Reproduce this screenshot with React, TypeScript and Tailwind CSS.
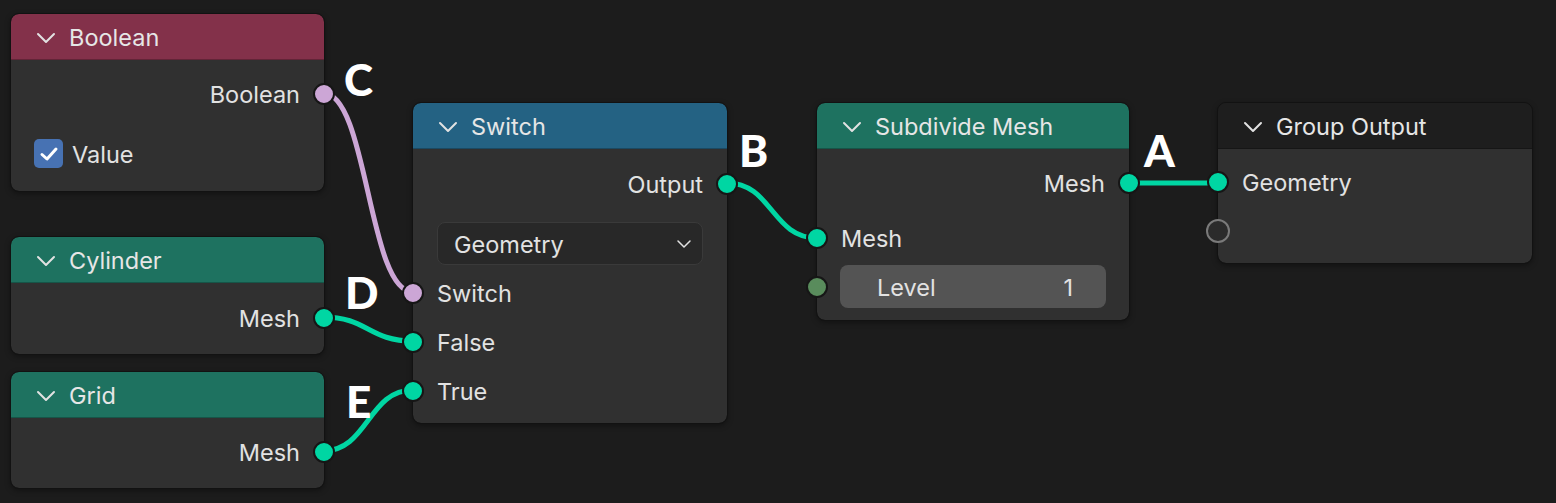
import React from "react";

type SocketKind = "geo" | "bool" | "int" | "empty";

const socketColor: Record<SocketKind, string> = {
    geo: "bg-[#00d6a3]",
    bool: "bg-[#cca6d6]",
    int: "bg-[#598c5c]",
    empty: "bg-[#2b2b2b]",
};

function Socket({ kind, side }: { kind: SocketKind; side: "left" | "right" }) {
    const pos = side === "left" ? "left-0 -translate-x-1/2" : "right-0 translate-x-1/2";
    if (kind === "empty") {
        return (
            <span
                className={`absolute top-1/2 -translate-y-1/2 ${pos} w-[24px] h-[24px] rounded-full border-2 border-[#7a7a7a] bg-[#2b2b2b]`}
            />
        );
    }
    return (
        <span
            className={`absolute top-1/2 -translate-y-1/2 ${pos} w-[22px] h-[22px] rounded-full border-2 border-[#161616] ${socketColor[kind]}`}
        />
    );
}

function Chevron({ className = "" }: { className?: string }) {
    return (
        <svg width="20" height="12" viewBox="0 0 20 12" className={className}>
            <path d="M2 2 L10 10 L18 2" fill="none" stroke="#e2e2e2" strokeWidth="2" strokeLinecap="round" strokeLinejoin="round" />
        </svg>
    );
}

function Row({
    children,
    socket,
    side,
    className = "",
}: {
    children?: React.ReactNode;
    socket?: SocketKind;
    side: "left" | "right";
    className?: string;
}) {
    return (
        <div
            className={`relative h-[49px] flex items-center px-[24px] ${side === "right" ? "justify-end" : "justify-start"} ${className}`}
        >
            {children}
            {socket && <Socket kind={socket} side={side} />}
        </div>
    );
}

function Node({
    left,
    top,
    width = "w-[314px]",
    title,
    header,
    bodyClass,
    children,
}: {
    left: number;
    top: number;
    width?: string;
    title: string;
    header: string;
    bodyClass: string;
    children: React.ReactNode;
}) {
    return (
        <div
            className={`absolute ${width} rounded-[8px] bg-[#303030] outline outline-1 outline-[#121212] shadow-[0_2px_6px_rgba(0,0,0,0.45)]`}
            style={{ left, top }}
        >
            <div className={`h-[46px] flex items-center rounded-t-[8px] border-b border-[#00000040] ${header}`}>
                <Chevron className="ml-[25px] mr-[13px] mt-[2px]" />
                <span className="text-[23.5px] text-[#e6e6e6] leading-none pt-[3px]">{title}</span>
            </div>
            <div className={bodyClass}>{children}</div>
        </div>
    );
}

function Label({ children }: { children: React.ReactNode }) {
    return <span className="text-[23.5px] text-[#e2e2e2] leading-none pt-[2px]">{children}</span>;
}

function Letter({ x, y, children }: { x: number; y: number; children: string }) {
    return (
        <span
            className="absolute text-[44px] leading-none font-black text-white"
            style={{ left: x, top: y, fontFamily: "Lato, 'Open Sans', sans-serif" }}
        >
            {children}
        </span>
    );
}

function wire(x1: number, y1: number, x2: number, y2: number) {
    const d = Math.max(30, Math.abs(x2 - x1) * 0.5);
    return `M${x1} ${y1} C${x1 + d} ${y1} ${x2 - d} ${y2} ${x2} ${y2}`;
}

export default function App() {
    return (
        <div
            className="relative w-[1556px] h-[503px] bg-[#1c1c1c] overflow-hidden"
            style={{ fontFamily: "Inter, 'Noto Sans', sans-serif" }}
        >
            <svg className="absolute inset-0" width="1556" height="503">
                <path d={wire(323, 93, 413, 292)} stroke="#cca6d6" strokeWidth="5" fill="none" />
                <path d={wire(323, 317, 413, 341)} stroke="#00d6a3" strokeWidth="5" fill="none" />
                <path d={wire(323, 451, 413, 390)} stroke="#00d6a3" strokeWidth="5" fill="none" />
                <path d={wire(727, 183, 817, 238)} stroke="#00d6a3" strokeWidth="5" fill="none" />
                <path d={wire(1129, 183, 1218, 183)} stroke="#00d6a3" strokeWidth="5" fill="none" />
            </svg>

            {/* Boolean */}
            <Node left={11} top={14} width="w-[313px]" title="Boolean" header="bg-[#83314a]" bodyClass="pt-[9px] pb-[13px]">
                <Row side="right" socket="bool">
                    <Label>Boolean</Label>
                </Row>
                <Row side="left" className="mt-[11px] !px-[23px]">
                    <span className="w-[29px] h-[29px] rounded-[5px] bg-[#4772b3] flex items-center justify-center mr-[9px]">
                        <svg width="20" height="16" viewBox="0 0 20 16">
                            <path d="M3 8.5 L8 13 L17 3" fill="none" stroke="#ffffff" strokeWidth="3" strokeLinecap="round" strokeLinejoin="round" />
                        </svg>
                    </span>
                    <Label>Value</Label>
                </Row>
            </Node>

            {/* Cylinder */}
            <Node left={11} top={237} width="w-[313px]" title="Cylinder" header="bg-[#1e7260]" bodyClass="pt-[10px] pb-[12px]">
                <Row side="right" socket="geo">
                    <Label>Mesh</Label>
                </Row>
            </Node>

            {/* Grid */}
            <Node left={11} top={372} width="w-[313px]" title="Grid" header="bg-[#1e7260]" bodyClass="pt-[9px] pb-[12px]">
                <Row side="right" socket="geo">
                    <Label>Mesh</Label>
                </Row>
            </Node>

            {/* Switch */}
            <Node left={413} top={103} title="Switch" header="bg-[#246283]" bodyClass="pt-[10px] pb-[8px]">
                <Row side="right" socket="geo">
                    <Label>Output</Label>
                </Row>
                <div className="mt-[11px] h-[49px] flex items-center px-[24px]">
                    <div className="w-full h-[43px] rounded-[8px] bg-[#282828] border border-[#3a3a3a] flex items-center justify-between pl-[16px] pr-[8px]">
                        <Label>Geometry</Label>
                        <Chevron className="scale-75" />
                    </div>
                </div>
                <Row side="left" socket="bool">
                    <Label>Switch</Label>
                </Row>
                <Row side="left" socket="geo">
                    <Label>False</Label>
                </Row>
                <Row side="left" socket="geo">
                    <Label>True</Label>
                </Row>
            </Node>

            {/* Subdivide Mesh */}
            <Node left={817} top={103} width="w-[312px]" title="Subdivide Mesh" header="bg-[#1e7260]" bodyClass="pt-[9px] pb-[9px]">
                <Row side="right" socket="geo">
                    <Label>Mesh</Label>
                </Row>
                <Row side="left" socket="geo" className="mt-[6px]">
                    <Label>Mesh</Label>
                </Row>
                <Row side="left" socket="int" className="!px-[23px]">
                    <div className="w-full h-[43px] rounded-[8px] bg-[#545454] flex items-center justify-between pl-[37px] pr-[33px]">
                        <Label>Level</Label>
                        <Label>1</Label>
                    </div>
                </Row>
            </Node>

            {/* Group Output */}
            <Node left={1218} top={103} title="Group Output" header="bg-[#1e1e1e]" bodyClass="pt-[8px] pb-[8px]">
                <Row side="left" socket="geo">
                    <Label>Geometry</Label>
                </Row>
                <Row side="left" socket="empty" />
            </Node>

            <Letter x={344} y={57}>C</Letter>
            <Letter x={739} y={128}>B</Letter>
            <Letter x={1144} y={128}>A</Letter>
            <Letter x={345} y={270}>D</Letter>
            <Letter x={346} y={379}>E</Letter>
        </div>
    );
}
